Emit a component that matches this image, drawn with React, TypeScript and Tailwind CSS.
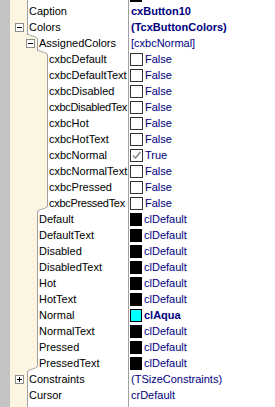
import React from 'react';

type Row = {
  name: string;
  level: number;
  value: string;
  bold?: boolean;
  tight?: boolean;
  expand?: 'minus' | 'plus';
  check?: boolean;
  swatch?: string;
};

const rows: Row[] = [
  { name: 'Caption', level: 0, value: 'cxButton10', bold: true },
  { name: 'Colors', level: 0, value: '(TcxButtonColors)', bold: true, expand: 'minus' },
  { name: 'AssignedColors', level: 1, value: '[cxbcNormal]', expand: 'minus' },
  { name: 'cxbcDefault', level: 2, value: 'False', check: false },
  { name: 'cxbcDefaultText', level: 2, value: 'False', check: false },
  { name: 'cxbcDisabled', level: 2, value: 'False', check: false },
  { name: 'cxbcDisabledTex', level: 2, value: 'False', check: false, tight: true },
  { name: 'cxbcHot', level: 2, value: 'False', check: false },
  { name: 'cxbcHotText', level: 2, value: 'False', check: false },
  { name: 'cxbcNormal', level: 2, value: 'True', check: true },
  { name: 'cxbcNormalText', level: 2, value: 'False', check: false },
  { name: 'cxbcPressed', level: 2, value: 'False', check: false },
  { name: 'cxbcPressedTex', level: 2, value: 'False', check: false, tight: true },
  { name: 'Default', level: 1, value: 'clDefault', swatch: '#000000' },
  { name: 'DefaultText', level: 1, value: 'clDefault', swatch: '#000000' },
  { name: 'Disabled', level: 1, value: 'clDefault', swatch: '#000000' },
  { name: 'DisabledText', level: 1, value: 'clDefault', swatch: '#000000' },
  { name: 'Hot', level: 1, value: 'clDefault', swatch: '#000000' },
  { name: 'HotText', level: 1, value: 'clDefault', swatch: '#000000' },
  { name: 'Normal', level: 1, value: 'clAqua', swatch: '#00ffff', bold: true },
  { name: 'NormalText', level: 1, value: 'clDefault', swatch: '#000000' },
  { name: 'Pressed', level: 1, value: 'clDefault', swatch: '#000000' },
  { name: 'PressedText', level: 1, value: 'clDefault', swatch: '#000000' },
  { name: 'Constraints', level: 0, value: '(TSizeConstraints)', expand: 'plus' },
  { name: 'Cursor', level: 0, value: 'crDefault' },
];

const gutterW = ['w-[17px]', 'w-[27px]', 'w-[37px]'];
const boxMl = ['ml-[5px]', 'ml-[16px]', 'ml-[26px]'];

function ExpandBox({ kind, level }: { kind: 'minus' | 'plus'; level: number }) {
  return (
    <svg width="9" height="9" viewBox="0 0 9 9" className={`${boxMl[level]} shrink-0`}>
      <rect x="0.5" y="0.5" width="8" height="8" fill="#fff" stroke="#8c8c8c" />
      <path d="M2 4.5h5" stroke="#000" />
      {kind === 'plus' && <path d="M4.5 2v5" stroke="#000" />}
    </svg>
  );
}

// tree edge steps one level in (top of row) or back out (bottom of row)
function StepIn() {
  return (
    <svg width="11" height="6" viewBox="0 0 11 6" className="absolute -top-[2px] -right-px z-10">
      <path d="M0.5 0C0.5 3 10.5 3 10.5 6L11 6L11 0Z" fill="#fff" />
      <path d="M0.5 0C0.5 3 10.5 3 10.5 6" fill="none" stroke="#a0a0a0" />
    </svg>
  );
}

function StepOut() {
  return (
    <svg width="11" height="6" viewBox="0 0 11 6" className="absolute -bottom-px -right-px z-10">
      <path d="M10.5 0C10.5 3 0.5 3 0.5 6L11 6L11 0Z" fill="#fff" />
      <path d="M10.5 0C10.5 3 0.5 3 0.5 6" fill="none" stroke="#a0a0a0" />
    </svg>
  );
}

function CheckBox({ on }: { on: boolean }) {
  return (
    <svg width="13" height="13" viewBox="0 0 13 13" className="shrink-0">
      <rect x="0.5" y="0.5" width="12" height="12" fill="#fff" stroke="#333" />
      {on && <path d="M3 6.5l2.5 2.5 5-6" fill="none" stroke="#7a7a7a" strokeWidth="1.2" />}
    </svg>
  );
}

function PropRow({ row, prev, next }: { row: Row; prev?: Row; next?: Row }) {
  const stepIn = prev && row.level > prev.level;
  const stepOut = next && next.level < row.level;
  return (
    <div className="flex h-4 leading-4">
      <div className="flex w-[129px] shrink-0">
        <div className="w-[10px] shrink-0 bg-[#c3c3c3]" />
        <div className={`relative flex shrink-0 items-center bg-[#fcf5e2] ${gutterW[row.level]}`}>
          {row.expand && <ExpandBox kind={row.expand} level={row.level} />}
          {stepIn && <StepIn />}
          {stepOut && <StepOut />}
        </div>
        <div
          className={`min-w-0 flex-1 overflow-hidden whitespace-nowrap border-l border-r border-[#a0a0a0] bg-white pl-px text-black ${
            row.tight ? 'tracking-[-0.3px]' : ''
          }`}
        >
          {row.name}
        </div>
      </div>
      <div className="flex min-w-0 flex-1 items-center whitespace-nowrap bg-white pl-px text-[#000080]">
        {row.check !== undefined && <CheckBox on={row.check} />}
        {row.swatch && (
          <div className="h-[13px] w-[12px] shrink-0 border border-black" style={{ background: row.swatch }} />
        )}
        <span className={`${row.check !== undefined || row.swatch ? 'ml-[2px]' : 'ml-px'} ${row.bold ? 'font-bold' : ''}`}>
          {row.value}
        </span>
      </div>
    </div>
  );
}

function Filler({ h, mark }: { h: string; mark?: boolean }) {
  return (
    <div className={`flex ${h}`}>
      <div className="flex w-[129px] shrink-0">
        <div className="w-[10px] shrink-0 bg-[#c3c3c3]" />
        <div className="w-[17px] shrink-0 bg-[#fcf5e2]" />
        <div className="flex-1 border-l border-r border-[#a0a0a0] bg-white" />
      </div>
      <div className="flex-1 bg-white pl-px">
        {mark && <div className="h-[2px] w-[12px] bg-black" />}
      </div>
    </div>
  );
}

export default function App() {
  return (
    <div className="h-[407px] w-[275px] overflow-hidden bg-white font-['Liberation_Sans',Arial,sans-serif] text-[11px]">
      <Filler h="h-[3px]" mark />
      {rows.map((r, i) => (
        <PropRow key={r.name} row={r} prev={rows[i - 1]} next={rows[i + 1]} />
      ))}
      <Filler h="h-[4px]" />
    </div>
  );
}
